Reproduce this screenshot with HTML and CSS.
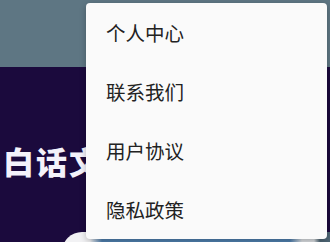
FILE: index.html
```html
<!DOCTYPE html>
<html lang="zh">
<head>
<meta charset="utf-8">
<link rel="stylesheet" href="styles.css">
</head>
<body>
<div class="page">
  <header class="topbar"></header>
  <main class="hero">
    <h1 class="title">白话文</h1>
    <div class="card"></div>
  </main>
  <nav class="menu">
    <div class="menu-item">个人中心</div>
    <div class="menu-item">联系我们</div>
    <div class="menu-item">用户协议</div>
    <div class="menu-item">隐私政策</div>
  </nav>
</div>
</body>
</html>
```
FILE: styles.css
```css
html, body {
  margin: 0;
  padding: 0;
}
body {
  font-family: "Noto Sans CJK SC", "Noto Sans", sans-serif;
  width: 330px;
  height: 242px;
  overflow: hidden;
}
.page {
  position: relative;
  width: 330px;
  height: 242px;
  display: flex;
  flex-direction: column;
  background: #1b0a3d;
}
.topbar {
  height: 67px;
  flex: none;
  background: #5e7683;
}
.hero {
  flex: 1;
  background: #1b0a3d;
  padding: 75px 0 0 3px;
  display: flex;
  flex-direction: column;
}
.title {
  margin: 0;
  font-size: 31px;
  line-height: 38px;
  font-weight: 900;
  color: #f4f2fa;
  letter-spacing: 2px;
}
.card {
  margin: 52px 0 0 59px;
  height: 20px;
  border-top-left-radius: 22px;
  background: linear-gradient(90deg, #f2f2f4 0, #f2f2f4 28px, #4f7fae 40px, #4f7fae 228px, #d9dde0 240px, #d9dde0 252px, #4d6574 258px);
}
.menu {
  position: absolute;
  top: 3px;
  left: 86px;
  width: 241px;
  height: 236px;
  background: #fafafa;
  border-radius: 4px;
  box-shadow: 0 2px 6px rgba(0, 0, 0, 0.25);
  display: flex;
  flex-direction: column;
}
.menu-item {
  height: 59px;
  display: flex;
  align-items: center;
  padding-left: 20px;
  font-size: 19.5px;
  color: #222;
}
```
